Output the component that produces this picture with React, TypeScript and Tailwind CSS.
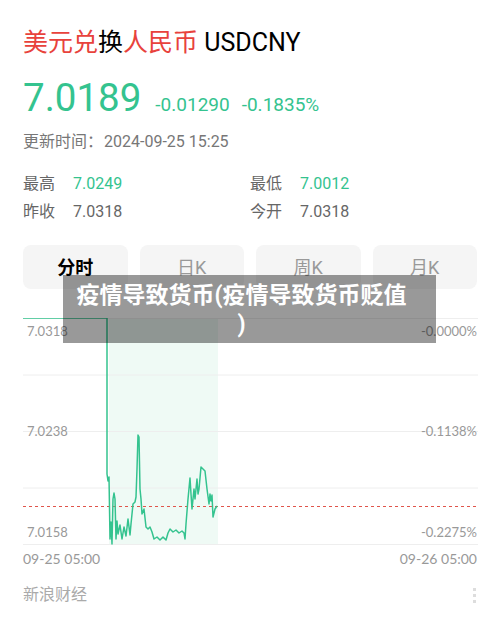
import React from "react"

const green = "#34c38f"

// 分时 line, page coords minus chart origin (23, 319)
const pts: [number, number][] = [
  [23, 319], [107, 319], [107, 475], [108, 482], [109, 478], [110, 540], [111, 523], [112, 545],
  [113, 500], [114, 494], [115, 500], [116, 540], [117, 522], [118, 535], [120, 526], [122, 540],
  [124, 528], [126, 537], [128, 520], [130, 536], [131, 525], [133, 505], [135, 503], [136, 498],
  [137, 470], [138, 436], [139, 438], [140, 490], [141, 500], [142, 515], [144, 510], [146, 528],
  [148, 530], [150, 528], [152, 533], [154, 540], [157, 538], [160, 541], [163, 538], [166, 541],
  [168, 534], [170, 530], [173, 533], [176, 531], [179, 534], [182, 532], [184, 534], [185, 540],
  [186, 525], [188, 500], [190, 479], [191, 495], [192, 510], [194, 490], [195, 500], [197, 480],
  [198, 495], [199, 490], [201, 468], [203, 470], [205, 472], [207, 490], [209, 505], [210, 495],
  [211, 502], [212, 496], [213, 518], [215, 510], [217, 507],
]

const linePath = pts.map(([x, y], i) => `${i ? "L" : "M"}${x - 23} ${y - 319}`).join(" ")

function Stat({ label, value, color }: { label: string; value: string; color: string }) {
  return (
    <div className="flex items-center gap-[18px] leading-[28px] text-[16px]">
      <span className="text-[#666]">{label}</span>
      <span style={{ color }}>{value}</span>
    </div>
  )
}

export default function App() {
  const tabs = ["分时", "日K", "周K", "月K"]
  return (
    <div
      className="relative w-[500px] h-[619px] bg-white overflow-hidden px-[23px]"
      style={{ fontFamily: "Roboto, 'Noto Sans CJK SC', sans-serif" }}
    >
      <div className="pt-[26px] text-[25px] leading-[34px]">
        <span className="text-[#e8423c]">美元兑</span>
        <span className="text-black">换</span>
        <span className="text-[#e8423c]">人民币</span>
        <span className="text-black"> USDCNY</span>
      </div>

      <div className="mt-[17px] flex items-baseline leading-[42px]" style={{ color: green }}>
        <span className="text-[38.5px]">7.0189</span>
        <span className="ml-[14px] text-[19px]">-0.01290</span>
        <span className="ml-[12px] text-[19px]">-0.1835%</span>
      </div>

      <div className="mt-[4px] text-[16px] leading-[24px] text-[#777]">
        更新时间：<span className="ml-[1px]">2024-09-25 15:25</span>
      </div>

      <div className="mt-[16px] grid grid-cols-2">
        <Stat label="最高" value="7.0249" color={green} />
        <Stat label="最低" value="7.0012" color={green} />
        <Stat label="昨收" value="7.0318" color="#666" />
        <Stat label="今开" value="7.0318" color="#666" />
      </div>

      <div className="mt-[19px] grid grid-cols-4 gap-[12px]">
        {tabs.map((t, i) => (
          <div
            key={t}
            className={`h-[44px] rounded-[8px] bg-[#f5f5f5] flex items-center justify-center text-[18px] ${
              i === 0 ? "font-bold text-black" : "text-[#999]"
            }`}
          >
            {t}
          </div>
        ))}
      </div>

      <div className="relative mt-[29px] h-[226px]" style={{ fontFamily: "Lato, Roboto, sans-serif" }}>
        <svg className="absolute inset-0" width="455" height="227" viewBox="0 0 455 227">
          <rect x="86" y="0" width="109" height="226" fill="#effaf5" />
          {[0, 56.5, 113, 169.5, 226].map(y => (
            <line key={y} x1="0" x2="455" y1={y + 0.5} y2={y + 0.5} stroke="#eeeeee" strokeWidth="1" />
          ))}
          <line x1="0" x2="455" y1="188.5" y2="188.5" stroke="#e0554b" strokeWidth="1.2" strokeDasharray="3 3" />
          <path d={linePath} fill="none" stroke={green} strokeWidth="1.5" strokeLinejoin="round" />
        </svg>
        <span className="absolute left-[4px] top-[5px] text-[13px] leading-[16px] text-[#999]">7.0318</span>
        <span className="absolute right-0 top-[5px] text-[13px] leading-[16px] text-[#999]">-0.0000%</span>
        <span className="absolute left-[4px] top-[105px] text-[13px] leading-[16px] text-[#999]">7.0238</span>
        <span className="absolute right-0 top-[105px] text-[13px] leading-[16px] text-[#999]">-0.1138%</span>
        <span className="absolute left-[4px] top-[206px] text-[13px] leading-[16px] text-[#999]">7.0158</span>
        <span className="absolute right-0 top-[206px] text-[13px] leading-[16px] text-[#999]">-0.2275%</span>
      </div>

      <div
        className="mt-[5px] flex justify-between text-[14px] leading-[20px] text-[#999]"
        style={{ fontFamily: "Lato, Roboto, sans-serif" }}
      >
        <span>09-25 05:00</span>
        <span>09-26 05:00</span>
      </div>

      <div className="mt-[11px] flex items-center justify-between text-[16px] leading-[30px] text-[#aaa]">
        <span>新浪财经</span>
        <div className="flex flex-col gap-[3px] pr-[1px]">
          <span className="w-[3px] h-[3px] bg-[#ddd]" />
          <span className="w-[3px] h-[3px] bg-[#ddd]" />
          <span className="w-[3px] h-[3px] bg-[#ddd]" />
        </div>
      </div>

      <div className="absolute left-[63px] top-[275px] w-[373px] h-[68px] pt-[6px] pl-[4px] pr-[20px] bg-black/40 text-white font-bold text-[23px] leading-[29px] text-center">
        <div className="whitespace-nowrap">疫情导致货币(疫情导致货币贬值</div>
        <div>)</div>
      </div>
    </div>
  )
}
